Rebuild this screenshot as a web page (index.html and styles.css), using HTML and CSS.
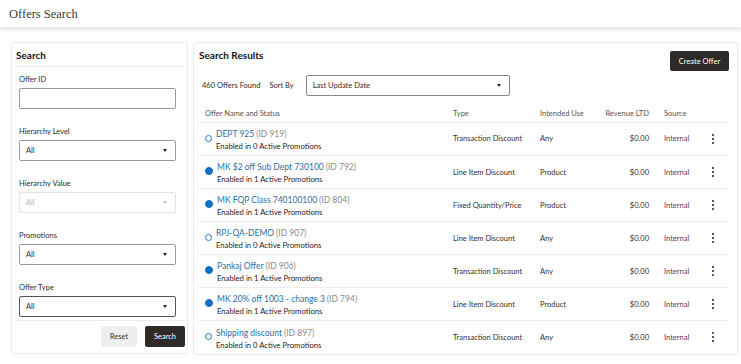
FILE: index.html
```html
<!DOCTYPE html>
<html lang="en">
<head>
    <meta charset="UTF-8">
    <title>Offers Search</title>
    <link rel="stylesheet" href="styles.css">
</head>
<body>
    <div class="topbar">Offers Search</div>
    <div class="main">
        <div class="panel search-panel">
            <div class="panel-title">Search</div>
            <div class="fields">
                <div class="field">
                    <label>Offer ID</label>
                    <div class="input"></div>
                </div>
                <div class="field">
                    <label>Hierarchy Level</label>
                    <div class="select">All<span class="caret"></span></div>
                </div>
                <div class="field">
                    <label>Hierarchy Value</label>
                    <div class="select disabled">All<span class="caret"></span></div>
                </div>
                <div class="field">
                    <label>Promotions</label>
                    <div class="select">All<span class="caret"></span></div>
                </div>
                <div class="field">
                    <label>Offer Type</label>
                    <div class="select focus">All<span class="caret"></span></div>
                </div>
            </div>
            <div class="actions">
                <button class="btn light">Reset</button>
                <button class="btn dark">Search</button>
            </div>
        </div>

        <div class="panel results-panel">
            <div class="results-head">
                <div class="panel-title">Search Results</div>
                <button class="btn dark create">Create Offer</button>
            </div>
            <div class="toolbar">
                <span class="found">460 Offers Found</span>
                <span class="sortby">Sort By</span>
                <div class="select sort">Last Update Date<span class="caret"></span></div>
            </div>
            <table class="results">
                <colgroup>
                    <col style="width:250px">
                    <col style="width:87px">
                    <col style="width:56px">
                    <col style="width:68px">
                    <col style="width:47px">
                    <col>
                </colgroup>
                <thead>
                    <tr>
                        <th class="c-name">Offer Name and Status</th>
                        <th>Type</th>
                        <th>Intended Use</th>
                        <th class="num">Revenue LTD</th>
                        <th>Source</th>
                        <th></th>
                    </tr>
                </thead>
                <tbody>
                    <tr>
                        <td class="c-name"><span class="dot"></span><div class="name"><a>DEPT 925</a> <span class="id">(ID 919)</span><div class="status">Enabled in 0 Active Promotions</div></div></td>
                        <td class="type">Transaction Discount</td><td>Any</td><td class="num">$0.00</td><td class="src">Internal</td><td class="more"><span class="kebab"></span></td>
                    </tr>
                    <tr>
                        <td class="c-name"><span class="dot on"></span><div class="name"><a>MK $2 off Sub Dept 730100</a> <span class="id">(ID 792)</span><div class="status">Enabled in 1 Active Promotions</div></div></td>
                        <td class="type">Line Item Discount</td><td>Product</td><td class="num">$0.00</td><td class="src">Internal</td><td class="more"><span class="kebab"></span></td>
                    </tr>
                    <tr>
                        <td class="c-name"><span class="dot on"></span><div class="name"><a>MK FQP Class 740100100</a> <span class="id">(ID 804)</span><div class="status">Enabled in 1 Active Promotions</div></div></td>
                        <td class="type">Fixed Quantity/Price</td><td>Product</td><td class="num">$0.00</td><td class="src">Internal</td><td class="more"><span class="kebab"></span></td>
                    </tr>
                    <tr>
                        <td class="c-name"><span class="dot"></span><div class="name"><a>RPJ-QA-DEMO</a> <span class="id">(ID 907)</span><div class="status">Enabled in 0 Active Promotions</div></div></td>
                        <td class="type">Line Item Discount</td><td>Any</td><td class="num">$0.00</td><td class="src">Internal</td><td class="more"><span class="kebab"></span></td>
                    </tr>
                    <tr>
                        <td class="c-name"><span class="dot on"></span><div class="name"><a>Pankaj Offer</a> <span class="id">(ID 906)</span><div class="status">Enabled in 1 Active Promotions</div></div></td>
                        <td class="type">Transaction Discount</td><td>Any</td><td class="num">$0.00</td><td class="src">Internal</td><td class="more"><span class="kebab"></span></td>
                    </tr>
                    <tr>
                        <td class="c-name"><span class="dot on"></span><div class="name"><a>MK 20% off 1003 - change 3</a> <span class="id">(ID 794)</span><div class="status">Enabled in 1 Active Promotions</div></div></td>
                        <td class="type">Line Item Discount</td><td>Product</td><td class="num">$0.00</td><td class="src">Internal</td><td class="more"><span class="kebab"></span></td>
                    </tr>
                    <tr>
                        <td class="c-name"><span class="dot"></span><div class="name"><a>Shipping discount</a> <span class="id">(ID 897)</span><div class="status">Enabled in 0 Active Promotions</div></div></td>
                        <td class="type">Transaction Discount</td><td>Any</td><td class="num">$0.00</td><td class="src">Internal</td><td class="more"><span class="kebab"></span></td>
                    </tr>
                </tbody>
            </table>
        </div>
    </div>
</body>
</html>
```

FILE: styles.css
```css
*{
    padding:0;
    margin:0;
    box-sizing:border-box;
}
body{
    font-family:Lato,"Open Sans",sans-serif;
    font-size:8px;
    color:#2b2b2b;
    background:#fff;
    width:741px;
    height:364px;
    overflow:hidden;
}
.topbar{
    height:27px;
    padding:7px 0 0 9px;
    font-family:"Liberation Serif",serif;
    font-size:12.5px;
    color:#3a3a3a;
    box-shadow:0 2px 5px rgba(0,0,0,.14);
}
.main{
    display:flex;
    gap:5px;
    padding:15px 3px 0 11px;
}
.panel{
    border:1px solid #ebebeb;
    border-radius:3px;
    background:#fff;
}
.panel-title{
    font-size:10px;
    font-weight:bold;
    color:#161513;
}

/* search panel */
.search-panel{
    width:177px;
    height:312px;
    display:flex;
    flex-direction:column;
}
.search-panel .panel-title{
    margin:0 3px;
    padding:6px 1px 5px;
    border-bottom:1px solid #ececec;
}
.fields{
    padding:8px 11px 0 7px;
    display:flex;
    flex-direction:column;
    gap:18px;
    flex:1;
}
.field label{
    display:block;
    font-size:7.5px;
    color:#2b2b2b;
    height:13px;
    line-height:9px;
}
.input,.select{
    height:21px;
    border:1px solid #999;
    border-radius:2px;
    background:#fff;
}
.select{
    position:relative;
    padding:0 6px;
    line-height:19px;
    font-size:7.5px;
    color:#2b2b2b;
}
.select.disabled{
    border-color:#e2e2e2;
    color:#b5b5b5;
}
.select.focus{
    border-color:#555;
}
.caret{
    position:absolute;
    right:8px;
    top:8px;
    border-left:2.5px solid transparent;
    border-right:2.5px solid transparent;
    border-top:3px solid #222;
}
.disabled .caret{
    border-top-color:#c4c4c4;
}
.actions{
    margin:0 2px 0 3px;
    padding:5px 0 6px;
    border-top:1px solid #ececec;
    display:flex;
    justify-content:flex-end;
    gap:8px;
}
.btn{
    height:21px;
    border:0;
    border-radius:2px;
    font-family:Lato,"Open Sans",sans-serif;
    font-size:7.5px;
    padding:0 7px;
}
.btn.light{
    background:#eeeeed;
    color:#333;
    width:36px;
}
.btn.dark{
    background:#2e2a27;
    color:#fff;
    width:40px;
}

/* results panel */
.results-panel{
    width:545px;
    height:313px;
    padding:0 9px 0 4px;
}
.results-head{
    display:flex;
    justify-content:space-between;
    align-items:flex-start;
    padding-top:6px;
}
.results-head .panel-title{
    padding-left:1px;
}
.btn.create{
    width:59px;
    height:20px;
    margin-top:2px;
    margin-right:-1px;
}
.toolbar{
    display:flex;
    align-items:center;
    margin-top:4px;
    padding-left:4px;
    font-size:7.5px;
}
.sortby{
    margin-left:9px;
}
.select.sort{
    width:204px;
    height:21px;
    margin-left:12px;
    border-color:#888;
}
.results{
    width:531px;
    margin-top:9px;
    border-collapse:collapse;
    table-layout:fixed;
}
.results th{
    font-weight:normal;
    font-size:7.5px;
    color:#555;
    text-align:left;
    height:17px;
    padding:0 5px;
    border-bottom:1px solid #ececec;
}
.results td{
    height:33px;
    padding:0 5px;
    font-size:7.5px;
    color:#3a2c2c;
    border-bottom:1px solid #ececec;
    vertical-align:middle;
}
.results tr:last-child td{
    border-bottom:0;
}
.results .c-name{
    padding-left:7px;
}
.results td.c-name{
    display:flex;
    align-items:center;
    gap:4px;
    padding-top:3px;
}
.results .num{
    text-align:right;
    padding-right:10px;
}
.results td.src{
    color:#6a3455;
}
.dot{
    width:7px;
    height:7px;
    border-radius:50%;
    border:1px solid #1f78c8;
    flex:none;
    margin-top:-4px;
}
.dot.on{
    background:#0f6fc6;
    border-color:#0f6fc6;
    width:8px;
    height:8px;
}
.name{
    line-height:12px;
}
.name a{
    font-size:8.5px;
    color:#2e6da4;
}
.name .id{
    font-size:8.5px;
    color:#8a8a8a;
}
.status{
    font-size:7.7px;
    line-height:11px;
    color:#2a2020;
}
.more{
    padding-left:8px;
}
.kebab{
    display:block;
    width:2px;
    height:2px;
    background:#222;
    border-radius:50%;
    box-shadow:0 -4px 0 #222,0 4px 0 #222;
    margin-left:1px;
}
```
